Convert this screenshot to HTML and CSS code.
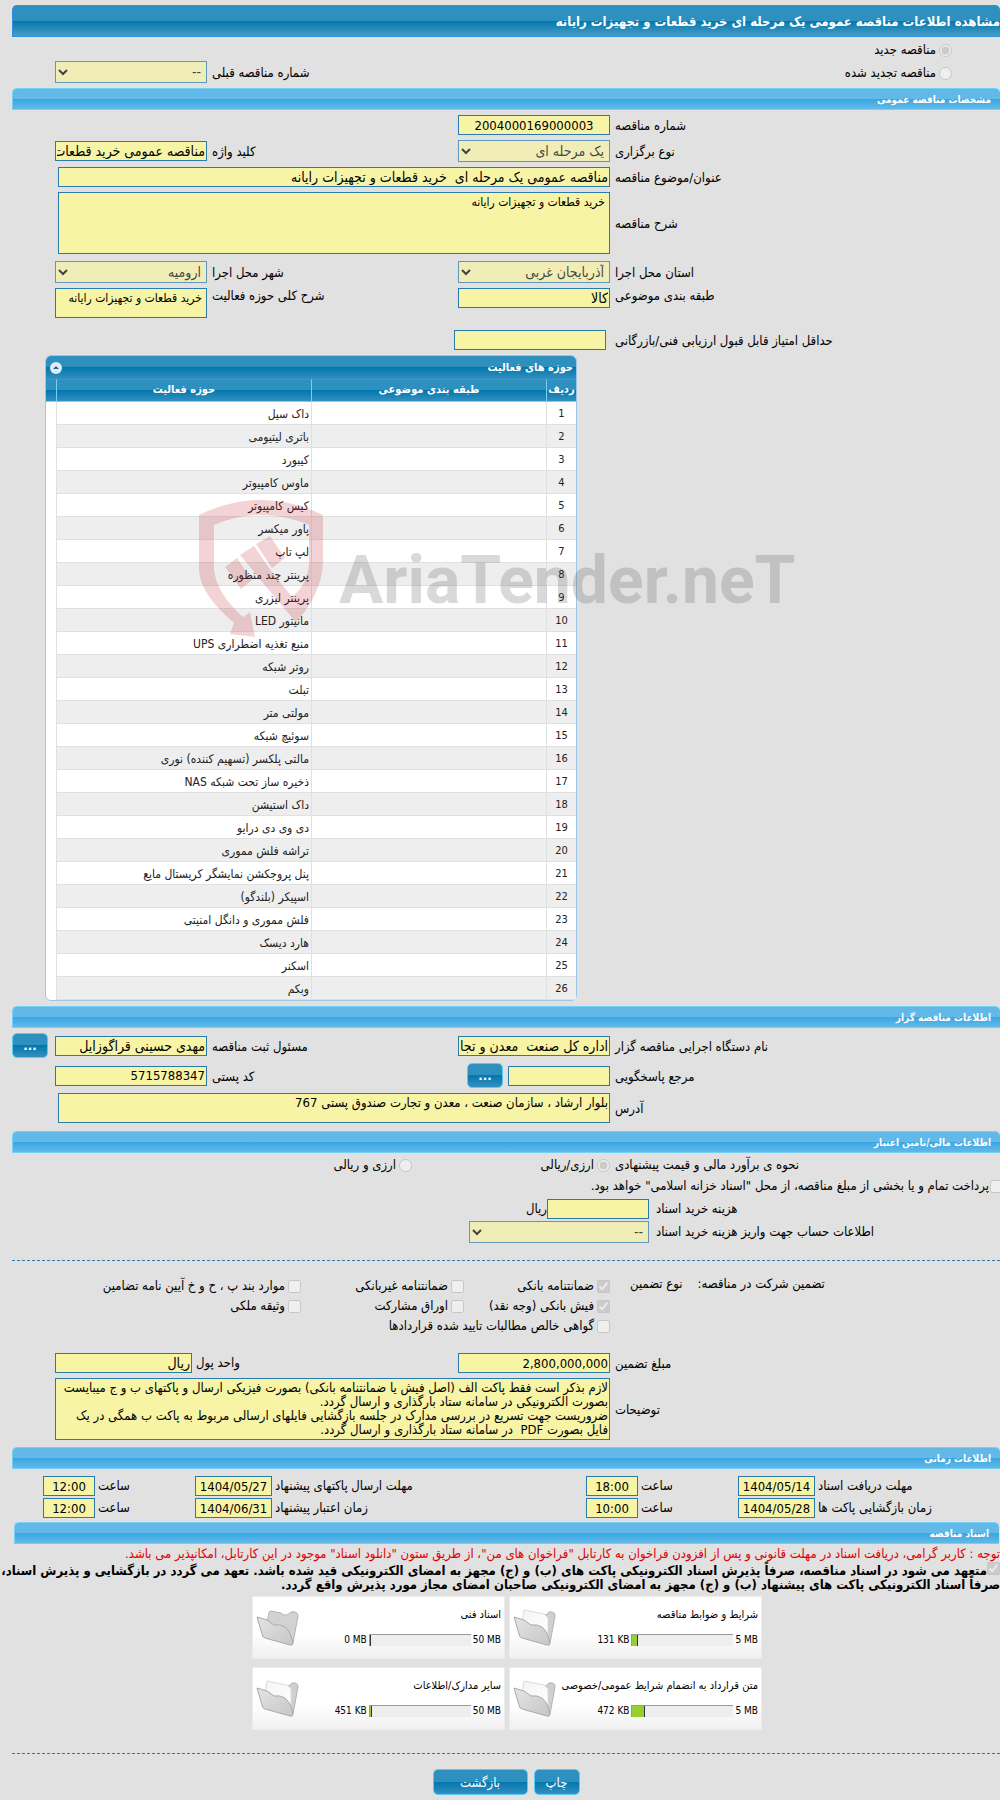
FILE: index.html
```html
<!DOCTYPE html>
<html lang="fa" dir="rtl">
<head>
    <meta charset="UTF-8">
    <meta name="viewport" content="width=device-width, initial-scale=1.0">
    <title>مشاهده اطلاعات مناقصه عمومی</title>
    <link rel="stylesheet" href="styles.css">
</head>
<body>
    <svg class="defs" width="0" height="0" aria-hidden="true">
        <defs>
            <linearGradient id="front" x1="0" y1="0" x2="1" y2="1">
                <stop offset="0" stop-color="#e4e4e4"/>
                <stop offset="1" stop-color="#c6c6c6"/>
            </linearGradient>
            <linearGradient id="paper" x1="0" y1="0" x2="1" y2="1">
                <stop offset="0" stop-color="#f4f4f4"/>
                <stop offset="1" stop-color="#ffffff"/>
            </linearGradient>
        </defs>
        <symbol id="folder-empty" viewBox="0 0 44 40">
            <path d="M13 6 Q13 4 15 4 L25 6 Q28 9 31 8 L35 5 Q42 4 42 9 L37 36 L8 30 Z" fill="#d2d2d2" stroke="#b4b4b4"/>
            <path d="M1 10 L11 13 L18 18 Q24 17 29 20 Q35 25 37 36 Q37 39 34 38 L9 31 Q6 30 6 27 Z" fill="url(#front)" stroke="#a9a9a9"/>
        </symbol>
        <symbol id="folder-full" viewBox="0 0 44 40">
            <path d="M27 7 L33 8 L36 5 Q42 4 42 9 L37 36 L24 28 Z" fill="#cfcfcf" stroke="#b4b4b4"/>
            <path d="M11 3 L31 7 L35 11 L35 30 L8 24 Z" fill="url(#paper)" stroke="#dcdcdc"/>
            <path d="M1 10 L11 13 L18 18 Q24 17 29 20 Q35 25 37 36 Q37 39 34 38 L9 31 Q6 30 6 27 Z" fill="url(#front)" stroke="#a9a9a9"/>
        </symbol>
    </svg>

    <div class="page">
        <h1 class="page-title">مشاهده اطلاعات مناقصه عمومی یک مرحله ای خرید قطعات و تجهیزات رایانه</h1>

        <!-- نوع مناقصه -->
        <div class="kind">
            <div class="kind-radios">
                <div class="choice"><input type="radio" id="kindNew" name="kind" checked disabled><label for="kindNew">مناقصه جدید</label></div>
                <div class="choice"><input type="radio" id="kindRenew" name="kind" disabled><label for="kindRenew">مناقصه تجدید شده</label></div>
            </div>
            <label class="kind-label" for="prevNo">شماره مناقصه قبلی</label>
            <select id="prevNo" disabled><option>--</option></select>
        </div>

        <!-- مشخصات مناقصه -->
        <h2 class="section-title">مشخصات مناقصه عمومی</h2>
        <div class="section">
            <div class="row">
                <label for="tenderNo">شماره مناقصه</label>
                <input type="text" id="tenderNo" class="num center" value="2004000169000003" readonly>
            </div>
            <div class="row">
                <label for="holdType">نوع برگزاری</label>
                <select id="holdType" disabled><option>یک مرحله ای</option></select>
                <label for="keyword">کلید واژه</label>
                <input type="text" id="keyword" value="مناقصه عمومی خرید قطعات و تجهیزات رایانه" readonly>
            </div>
            <div class="row">
                <label for="subject">عنوان/موضوع مناقصه</label>
                <input type="text" id="subject" class="wide" value="مناقصه عمومی یک مرحله ای  خرید قطعات و تجهیزات رایانه" readonly>
            </div>
            <div class="row row-tall">
                <label for="desc">شرح مناقصه</label>
                <textarea id="desc" class="wide tall padded" readonly>خرید قطعات و تجهیزات رایانه</textarea>
            </div>
            <div class="row">
                <label for="province">استان محل اجرا</label>
                <select id="province" disabled><option>آذربایجان غربی</option></select>
                <label for="city">شهر محل اجرا</label>
                <select id="city" disabled><option>ارومیه</option></select>
            </div>
            <div class="row row-top">
                <label for="category">طبقه بندی موضوعی</label>
                <input type="text" id="category" value="کالا" readonly>
                <label for="fieldDesc">شرح کلی حوزه فعالیت</label>
                <textarea id="fieldDesc" class="padded" readonly>خرید قطعات و تجهیزات رایانه</textarea>
            </div>
            <div class="row score">
                <label for="minScore">حداقل امتیاز قابل قبول ارزیابی فنی/بازرگانی</label>
                <input type="text" id="minScore" readonly>
            </div>
        </div>

        <!-- جدول حوزه های فعالیت -->
        <div class="grid-box">
            <div class="grid-caption">
                <span>حوزه های فعالیت</span>
                <button type="button" class="collapse" aria-label="بستن">
                    <svg width="12" height="12" viewBox="0 0 12 12"><circle cx="6" cy="6" r="6" fill="#dfecf7"/><path d="M3 7 L6 4 L9 7 Z" fill="#1a6c9c"/></svg>
                </button>
            </div>
            <table>
                <thead>
                    <tr><th class="col-no">ردیف</th><th class="col-cat">طبقه بندی موضوعی</th><th>حوزه فعالیت</th><th class="col-end"></th></tr>
                </thead>
                <tbody>
                    <tr><td>1</td><td></td><td>داک سیل</td><td></td></tr>
                    <tr><td>2</td><td></td><td>باتری لیتیومی</td><td></td></tr>
                    <tr><td>3</td><td></td><td>کیبورد</td><td></td></tr>
                    <tr><td>4</td><td></td><td>ماوس کامپیوتر</td><td></td></tr>
                    <tr><td>5</td><td></td><td>کیس کامپیوتر</td><td></td></tr>
                    <tr><td>6</td><td></td><td>پاور میکسر</td><td></td></tr>
                    <tr><td>7</td><td></td><td>لپ تاپ</td><td></td></tr>
                    <tr><td>8</td><td></td><td>پرینتر چند منظوره</td><td></td></tr>
                    <tr><td>9</td><td></td><td>پرینتر لیزری</td><td></td></tr>
                    <tr><td>10</td><td></td><td>مانیتور LED</td><td></td></tr>
                    <tr><td>11</td><td></td><td>منبع تغذیه اضطراری UPS</td><td></td></tr>
                    <tr><td>12</td><td></td><td>روتر شبکه</td><td></td></tr>
                    <tr><td>13</td><td></td><td>تبلت</td><td></td></tr>
                    <tr><td>14</td><td></td><td>مولتی متر</td><td></td></tr>
                    <tr><td>15</td><td></td><td>سوئیچ شبکه</td><td></td></tr>
                    <tr><td>16</td><td></td><td>مالتی پلکسر (تسهیم کننده) نوری</td><td></td></tr>
                    <tr><td>17</td><td></td><td>ذخیره ساز تحت شبکه NAS</td><td></td></tr>
                    <tr><td>18</td><td></td><td>داک استیشن</td><td></td></tr>
                    <tr><td>19</td><td></td><td>دی وی دی درایو</td><td></td></tr>
                    <tr><td>20</td><td></td><td>تراشه فلش مموری</td><td></td></tr>
                    <tr><td>21</td><td></td><td>پنل پروجکشن نمایشگر کریستال مایع</td><td></td></tr>
                    <tr><td>22</td><td></td><td>اسپیکر (بلندگو)</td><td></td></tr>
                    <tr><td>23</td><td></td><td>فلش مموری و دانگل امنیتی</td><td></td></tr>
                    <tr><td>24</td><td></td><td>هارد دیسک</td><td></td></tr>
                    <tr><td>25</td><td></td><td>اسکنر</td><td></td></tr>
                    <tr><td>26</td><td></td><td>وبکم</td><td></td></tr>
                </tbody>
            </table>
            <div class="watermark" dir="ltr">
                <svg width="126" height="138" viewBox="0 0 126 138" fill="#c1121f">
                    <path d="M0 15 Q62 -15 124 15 L124 63 Q122 95 97 122 Q94 119 60 78 L72 71 L93 97 Q109 84 110 63 L110 25 Q62 5 15 25 L15 70 Q18 94 44 117 L51 112 L56 137 L31 134 L35 123 Q1 94 0 70 Z"/>
                    <path d="M26 67 L38 58 L53 80 L42 89 Z M41 55 L55 46 L72 71 L60 78 Z M57 44 L71 36 L86 58 L73 68 Z"/>
                </svg>
                <span>AriaTender.neT</span>
            </div>
        </div>

        <!-- مناقصه گزار -->
        <h2 class="section-title">اطلاعات مناقصه گزار</h2>
        <div class="section owner">
            <div class="row">
                <label for="org">نام دستگاه اجرایی مناقصه گزار</label>
                <input type="text" id="org" value="اداره کل صنعت  معدن و تجارت استان" readonly>
                <label for="registrar">مسئول ثبت مناقصه</label>
                <input type="text" id="registrar" value="مهدی حسینی قراگوزایل" readonly>
                <button type="button" class="btn dots">...</button>
            </div>
            <div class="row">
                <label for="contact">مرجع پاسخگویی</label>
                <div class="with-btn">
                    <input type="text" id="contact" readonly>
                    <button type="button" class="btn dots">...</button>
                </div>
                <label for="postal">کد پستی</label>
                <input type="text" id="postal" class="num" value="5715788347" readonly>
            </div>
            <div class="row">
                <label for="address">آدرس</label>
                <textarea id="address" class="wide" readonly>بلوار ارشاد ، سازمان صنعت ، معدن و تجارت صندوق پستی 767</textarea>
            </div>
        </div>

        <!-- اطلاعات مالی -->
        <h2 class="section-title">اطلاعات مالی/تامین اعتبار</h2>
        <div class="section finance">
            <div class="row estimate">
                <span class="caption">نحوه ی برآورد مالی و قیمت پیشنهادی</span>
                <div class="choice"><input type="radio" id="curOne" name="cur" checked disabled><label for="curOne">ارزی/ریالی</label></div>
                <div class="choice"><input type="radio" id="curBoth" name="cur" disabled><label for="curBoth">ارزی و ریالی</label></div>
            </div>
            <div class="choice treasury"><input type="checkbox" id="treasury" disabled><label for="treasury">پرداخت تمام و یا بخشی از مبلغ مناقصه، از محل "اسناد خزانه اسلامی" خواهد بود.</label></div>
            <div class="fee">
                <label for="fee">هزینه خرید اسناد</label>
                <div><input type="text" id="fee" readonly><span>ریال</span></div>
                <label for="account">اطلاعات حساب جهت واریز هزینه خرید اسناد</label>
                <select id="account" disabled><option>--</option></select>
            </div>
        </div>
        <hr>
        <div class="section guarantee">
            <div class="guarantee-types">
                <div class="captions"><span>تضمین شرکت در مناقصه:</span><span>نوع تضمین</span></div>
                <div class="choice"><input type="checkbox" id="g1" checked disabled><label for="g1">ضمانتنامه بانکی</label></div>
                <div class="choice"><input type="checkbox" id="g2" disabled><label for="g2">ضمانتنامه غیربانکی</label></div>
                <div class="choice"><input type="checkbox" id="g3" disabled><label for="g3">موارد بند پ ، ح و خ آیین نامه تضامین</label></div>
                <div class="choice first"><input type="checkbox" id="g4" checked disabled><label for="g4">فیش بانکی (وجه نقد)</label></div>
                <div class="choice"><input type="checkbox" id="g5" disabled><label for="g5">اوراق مشارکت</label></div>
                <div class="choice"><input type="checkbox" id="g6" disabled><label for="g6">وثیقه ملکی</label></div>
                <div class="choice first"><input type="checkbox" id="g7" disabled><label for="g7">گواهی خالص مطالبات تایید شده قراردادها</label></div>
            </div>
            <div class="row amount">
                <label for="amount">مبلغ تضمین</label>
                <input type="text" id="amount" class="num" value="2,800,000,000" readonly>
                <div class="unit">
                    <label for="unit">واحد پول</label>
                    <input type="text" id="unit" value="ریال" readonly>
                </div>
            </div>
            <div class="row row-tall">
                <label for="notes">توضیحات</label>
                <textarea id="notes" class="wide tall full" readonly>لازم بذکر است فقط پاکت الف (اصل فیش یا ضمانتنامه بانکی) بصورت فیزیکی ارسال و پاکتهای ب و ج میبایست بصورت الکترونیکی در سامانه ستاد بارگذاری و ارسال گردد.
ضروریست جهت تسریع در بررسی مدارک در جلسه بازگشایی فایلهای ارسالی مربوط به پاکت ب همگی در یک فایل بصورت PDF  در سامانه ستاد بارگذاری و ارسال گردد.</textarea>
            </div>
        </div>

        <!-- اطلاعات زمانی -->
        <h2 class="section-title">اطلاعات زمانی</h2>
        <div class="times">
            <label for="d1">مهلت دریافت اسناد</label><input type="text" id="d1" class="num" value="1404/05/14" readonly>
            <label for="t1">ساعت</label><input type="text" id="t1" class="num" value="18:00" readonly>
            <label for="d2">مهلت ارسال پاکتهای پیشنهاد</label><input type="text" id="d2" class="num" value="1404/05/27" readonly>
            <label for="t2">ساعت</label><input type="text" id="t2" class="num" value="12:00" readonly>
            <label for="d3">زمان بازگشایی پاکت ها</label><input type="text" id="d3" class="num" value="1404/05/28" readonly>
            <label for="t3">ساعت</label><input type="text" id="t3" class="num" value="10:00" readonly>
            <label for="d4">زمان اعتبار پیشنهاد</label><input type="text" id="d4" class="num" value="1404/06/31" readonly>
            <label for="t4">ساعت</label><input type="text" id="t4" class="num" value="12:00" readonly>
        </div>

        <!-- اسناد -->
        <h2 class="section-title docs-title">اسناد مناقصه</h2>
        <p class="notice">توجه : کاربر گرامی، دریافت اسناد در مهلت قانونی و پس از افزودن فراخوان به کارتابل "فراخوان های من"، از طریق ستون "دانلود اسناد" موجود در این کارتابل، امکانپذیر می باشد.</p>
        <div class="commit"><input type="checkbox" id="commit" checked disabled><label for="commit">متعهد می شود در اسناد مناقصه، صرفاً پذیرش اسناد الکترونیکی پاکت های (ب) و (ج) مجهز به امضای الکترونیکی قید شده باشد. تعهد می گردد در بازگشایی و پذیرش اسناد،<br>صرفاً اسناد الکترونیکی پاکت های پیشنهاد (ب) و (ج) مجهز به امضای الکترونیکی صاحبان امضای مجاز مورد پذیرش واقع گردد.</label></div>

        <div class="docs">
            <div class="doc">
                <div class="doc-body">
                    <a href="#">شرایط و ضوابط مناقصه</a>
                    <div class="quota" dir="ltr"><span>131 KB</span><div class="bar"><div class="fill" style="width: 5%"></div></div><span>5 MB</span></div>
                </div>
                <svg class="folder"><use href="#folder-full"/></svg>
            </div>
            <div class="doc">
                <div class="doc-body">
                    <a href="#">اسناد فنی</a>
                    <div class="quota" dir="ltr"><span>0 MB</span><div class="bar"><div class="fill" style="width: 1%"></div></div><span>50 MB</span></div>
                </div>
                <svg class="folder"><use href="#folder-empty"/></svg>
            </div>
            <div class="doc">
                <div class="doc-body">
                    <a href="#">متن قرارداد به انضمام شرایط عمومی/خصوصی</a>
                    <div class="quota" dir="ltr"><span>472 KB</span><div class="bar"><div class="fill" style="width: 12%"></div></div><span>5 MB</span></div>
                </div>
                <svg class="folder"><use href="#folder-full"/></svg>
            </div>
            <div class="doc">
                <div class="doc-body">
                    <a href="#">سایر مدارک/اطلاعات</a>
                    <div class="quota" dir="ltr"><span>451 KB</span><div class="bar"><div class="fill" style="width: 2%"></div></div><span>50 MB</span></div>
                </div>
                <svg class="folder"><use href="#folder-full"/></svg>
            </div>
        </div>
        <hr>
        <div class="actions">
            <button type="button" class="btn">چاپ</button>
            <button type="button" class="btn back">بازگشت</button>
        </div>
    </div>
</body>
</html>
```

FILE: styles.css
```css
* {
    box-sizing: border-box;
}
body {
    margin: 0;
    background: #e1e1e1;
    color: #000;
    font-family: "DejaVu Sans Condensed", "DejaVu Sans", sans-serif;
    font-size: 13px;
    line-height: 16px;
}
.defs {
    position: absolute;
}
.page {
    padding: 5px 0 6px 12px;
    overflow: hidden;
}
input, select, textarea, button {
    font-family: inherit;
    margin: 0;
}
label, .caption {
    white-space: nowrap;
}

/* titles */
.page-title {
    margin: 0;
    height: 32px;
    line-height: 32px;
    color: #fff;
    font-size: 13px;
    white-space: nowrap;
    border: 1px solid #2f8fdc;
    border-right: 0;
    border-radius: 5px 5px 0 0;
    background: linear-gradient(#2e90bf 50%, #0277ae 50%, #4a9dc4);
}
.section-title {
    margin: 0;
    height: 22px;
    line-height: 21px;
    padding-right: 9px;
    color: #fff;
    font-size: 10px;
    border: 1px solid #75d0f8;
    border-right: 0;
    border-radius: 5px 5px 0 0;
    background: linear-gradient(#62b9e8 50%, #38a6e2 50%, #62b9e8);
}

/* fields */
input[type="text"], textarea, select {
    width: 100%;
    height: 20px;
    padding: 0 1px;
    border: 1px solid #2a7aab;
    border-radius: 0;
    background: #f7f4a5;
    color: #000;
    font-size: 14px;
    outline: none;
}
input[type="text"].num {
    font-size: 13px;
}
textarea {
    display: block;
    height: 30px;
    font-size: 13px;
    line-height: 14px;
    padding: 2px 1px;
    resize: none;
    overflow: hidden;
}
textarea.padded {
    padding: 2px 4px;
    font-size: 12px;
}
textarea.tall {
    height: 62px;
}
select {
    height: 22px;
}
input[type="text"].center {
    text-align: center;
}
input[type="radio"], input[type="checkbox"] {
    width: 13px;
    height: 13px;
    flex: none;
}
.choice {
    display: flex;
    align-items: center;
    gap: 3px;
}

.kind {
    display: grid;
    grid-template-columns: 1fr auto 152px;
    column-gap: 5px;
    align-items: end;
    height: 51px;
    padding: 0 48px 5px 43px;
}
.kind-radios {
    display: grid;
    gap: 7px;
    padding-bottom: 2px;
}
.kind-label {
    padding-bottom: 2px;
}

.section {
    padding: 5px 0 0 43px;
}
.row {
    display: grid;
    grid-template-columns: 1fr 152px 241px 152px;
    column-gap: 5px;
    align-items: center;
    margin-bottom: 5px;
    text-align: left;
}
.row > label {
    padding-top: 2px;
}
.row input, .row textarea, .row select {
    text-align: right;
}
.row input.center {
    text-align: center;
}
.row-tall {
    margin-bottom: 7px;
}
.row-top {
    align-items: start;
    margin-bottom: 12px;
}
.row-top > label {
    padding-top: 0;
}
.wide {
    grid-column: 2 / 5;
}
.row .wide {
    width: calc(100% - 3px);
}
.row .full {
    width: 100%;
}
.score input {
    margin-right: 4px;
}

/* activity table */
.grid-box {
    position: relative;
    width: 532px;
    margin: 0 auto 5px 33px;
    border: 1px solid #9cc5e6;
    border-radius: 6px;
    background: #fff;
}
.grid-caption {
    display: flex;
    justify-content: space-between;
    align-items: center;
    height: 23px;
    padding: 0 3px 0 4px;
    color: #fff;
    font-size: 11px;
    font-weight: bold;
    border-radius: 5px 5px 0 0;
    background: linear-gradient(#2e90bf 50%, #0277ae 50%, #3490c0);
}
.collapse {
    display: flex;
    padding: 0;
    border: 0;
    background: none;
}
.grid-box table {
    width: 100%;
    table-layout: fixed;
    border-collapse: separate;
    border-spacing: 0;
}
.grid-box th {
    height: 23px;
    padding: 0 0 2px;
    color: #fff;
    font-size: 11px;
    line-height: 16px;
    border-left: 1px solid #75d0f8;
    border-bottom: 1px solid #75d0f8;
    border-top: 1px solid #3d94d4;
    background: linear-gradient(#2e90bf 50%, #0277ae 50%, #3490c0);
}
.col-no {
    width: 30px;
}
.col-cat {
    width: 235px;
}
.col-end {
    width: 10px;
}
.grid-box td {
    height: 23px;
    padding: 1px 2px 0;
    color: #222;
    font-size: 12px;
    line-height: 16px;
    border-left: 1px solid #e0e0e0;
    border-bottom: 1px solid #e0e0e0;
}
.grid-box td:first-child {
    text-align: center;
    font-size: 11px;
}
.grid-box tbody tr:nth-child(even) td {
    background: #eee;
}
.grid-box tbody tr td:last-child {
    background: none;
    border: 0;
}
.grid-box th:last-child {
    border-left: 0;
}
.watermark {
    position: absolute;
    left: 153px;
    top: 144px;
    display: flex;
    align-items: flex-end;
    gap: 14px;
    opacity: .18;
    pointer-events: none;
}
.watermark span {
    color: #333;
    font-family: Roboto, "Liberation Sans", sans-serif;
    font-size: 66px;
    font-weight: bold;
    line-height: 114px;
}

/* buttons */
.btn {
    height: 26px;
    min-width: 46px;
    padding: 0 8px;
    color: #fff;
    font-size: 13px;
    border: 1px solid #5cc8f5;
    border-radius: 5px;
    background: linear-gradient(#2e90bf 50%, #0277ae 50%, #3490c0);
    cursor: pointer;
}
.btn.dots {
    width: 36px;
    min-width: 36px;
    height: 25px;
    font-weight: bold;
}
.btn.back {
    width: 95px;
}

/* tender owner */
.owner {
    padding: 5px 0 0;
}
.owner .row {
    grid-template-columns: 1fr 152px 241px 152px 38px;
    padding-left: 0;
}
.owner .dots {
    justify-self: end;
}
.with-btn {
    display: flex;
    gap: 5px;
    align-items: center;
}
.with-btn input {
    width: 102px;
}
.owner .row:last-child {
    margin-bottom: 8px;
}

/* finance */
.finance {
    padding-top: 4px;
}
.estimate {
    grid-template-columns: 1fr 193px 357px;
    margin-bottom: 5px;
}
.treasury {
    margin-right: -3px;
    gap: 1px;
    margin-bottom: 5px;
}
.fee {
    display: grid;
    grid-template-columns: 1fr 180px;
    gap: 2px 7px;
    align-items: center;
    padding-left: 414px;
    text-align: left;
}
.fee div {
    display: flex;
    align-items: center;
}
.fee input {
    width: 102px;
}
hr {
    margin: 17px 0 0;
    border: 0;
    border-top: 1px dashed #2a7aab;
}

/* guarantee */
.guarantee {
    padding-top: 15px;
}
.guarantee-types {
    display: grid;
    grid-template-columns: 1fr 146px 163px 246px;
    grid-auto-rows: 20px;
    margin-bottom: 17px;
}
.captions {
    display: flex;
    justify-content: flex-end;
    gap: 15px;
    padding-left: 20px;
    white-space: nowrap;
}
.guarantee-types .first {
    grid-column-start: 2;
}
.unit {
    display: flex;
    grid-column: 3 / 5;
    justify-content: flex-end;
    align-items: center;
    gap: 4px;
}
.unit input[type="text"] {
    width: 137px;
}

/* times */
.times {
    display: grid;
    grid-template-columns: 1fr 77px 94px 52px 308px 77px 94px 52px;
    gap: 2px 3px;
    align-items: center;
    padding: 7px 0 4px 31px;
    text-align: left;
}
.times input[type="text"] {
    text-align: center;
}

/* documents */
.docs-title {
    margin: 0 1px 0 2px;
    padding-right: 10px;
}
.notice {
    margin: 2px 0 0;
    color: #e00000;
    white-space: nowrap;
}
.commit {
    font-weight: bold;
    line-height: 14px;
    margin: 0 0 4px;
    white-space: nowrap;
}
.docs {
    display: grid;
    grid-template-columns: 253px 253px;
    gap: 8px 4px;
    padding: 0 238px 0 0;
}
.doc {
    display: flex;
    justify-content: space-between;
    height: 63px;
    padding: 10px 3px;
    border: 1px solid #ececec;
    background: linear-gradient(#fff 60%, #f0f0f0);
    font-size: 11px;
}
.doc-body {
    display: flex;
    flex-direction: column;
    justify-content: space-between;
    white-space: nowrap;
}
.doc a {
    color: #000;
    text-decoration: none;
}
.quota {
    display: flex;
    align-items: center;
    gap: 2px;
    align-self: flex-start;
    font-size: 10px;
}
.bar {
    width: 102px;
    height: 12px;
    border-top: 1px solid #999;
    border-left: 1px solid #999;
    background: #eee;
}
.fill {
    height: 100%;
    background: #9acd32;
    border-right: 1px solid #333;
}
.folder {
    width: 44px;
    height: 40px;
    flex: none;
}
.docs + hr {
    margin-top: 23px;
}
.actions {
    display: flex;
    justify-content: center;
    gap: 6px;
    padding-top: 15px;
}
```
